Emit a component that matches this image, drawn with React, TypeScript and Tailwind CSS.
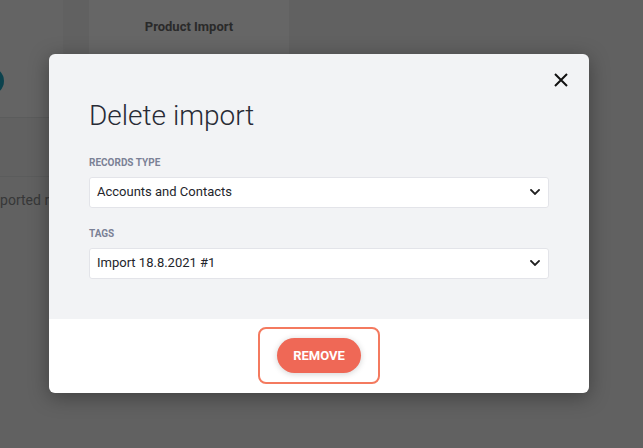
import React from "react";

function Chevron() {
  return (
    <svg width="10" height="6" viewBox="0 0 10 6" fill="none" className="shrink-0">
      <path d="M1 1l4 4 4-4" stroke="#1f1f1f" strokeWidth="1.8" strokeLinecap="square" />
    </svg>
  );
}

function SelectBox({ value }: { value: string }) {
  return (
    <div className="flex h-[31px] items-center justify-between rounded-[3px] border border-[#e3e4e9] bg-white pl-[7px] pr-[8px]">
      <span className="text-[13px] text-[#23252b]">{value}</span>
      <Chevron />
    </div>
  );
}

export default function App() {
  return (
    <div
      className="relative h-[448px] w-[643px] overflow-hidden bg-[#f2f3f3]"
      style={{ fontFamily: "Roboto, 'Liberation Sans', sans-serif" }}
    >
      {/* underlying page */}
      <div className="flex h-[117px] gap-[26px]">
        <div className="flex w-[63px] items-center bg-[#fbfbfb]">
          <div className="ml-[-28px] mt-[44px] h-[28px] w-[32px] rounded-full bg-[#1ea5c0]" />
        </div>
        <div className="h-[200px] w-[200px] bg-white pt-[17px] text-center text-[13px] font-bold text-[#6a6a6a]">
          Product Import
        </div>
      </div>
      <div className="h-[60px] w-[63px] border-y border-[#e4e5e5]" />
      <div className="ml-[-16px] mt-[13px] text-[14px] text-[#8a8b8c]">Imported records</div>

      {/* overlay */}
      <div className="absolute inset-0 bg-black/60 pl-[49px] pt-[54px]">
        <div className="w-[540px] overflow-hidden rounded-[6px] shadow-[0_4px_20px_rgba(0,0,0,0.35)]">
          <div className="relative bg-[#f2f3f5] px-[40px] pb-[40px] pt-[45px]">
            <button className="absolute right-[21px] top-[19px] flex h-[14px] w-[14px] items-center justify-center">
              <svg width="14" height="14" viewBox="0 0 14 14" fill="none">
                <path d="M1 1l12 12M13 1L1 13" stroke="#111" strokeWidth="2" />
              </svg>
            </button>
            <h1 className="text-[28px] font-light leading-[1.2] text-[#282b35]">Delete import</h1>
            <div className="mt-[24px] text-[10px] font-bold uppercase leading-[12px] text-[#7b8196]">
              Records type
            </div>
            <div className="mt-[8px]">
              <SelectBox value="Accounts and Contacts" />
            </div>
            <div className="mt-[20px] text-[10px] font-bold uppercase leading-[12px] text-[#7b8196]">
              Tags
            </div>
            <div className="mt-[8px]">
              <SelectBox value="Import 18.8.2021 #1" />
            </div>
          </div>
          <div className="flex h-[74px] items-center justify-center bg-white">
            <div className="rounded-[8px] border-2 border-[#f47a5f] px-[17px] py-[9px]">
              <button className="flex h-[35px] w-[84px] items-center justify-center rounded-full bg-[#ef6856] text-[13px] font-bold text-white shadow-[0_1px_6px_rgba(0,0,0,0.18)]">
                REMOVE
              </button>
            </div>
          </div>
        </div>
      </div>
    </div>
  );
}
